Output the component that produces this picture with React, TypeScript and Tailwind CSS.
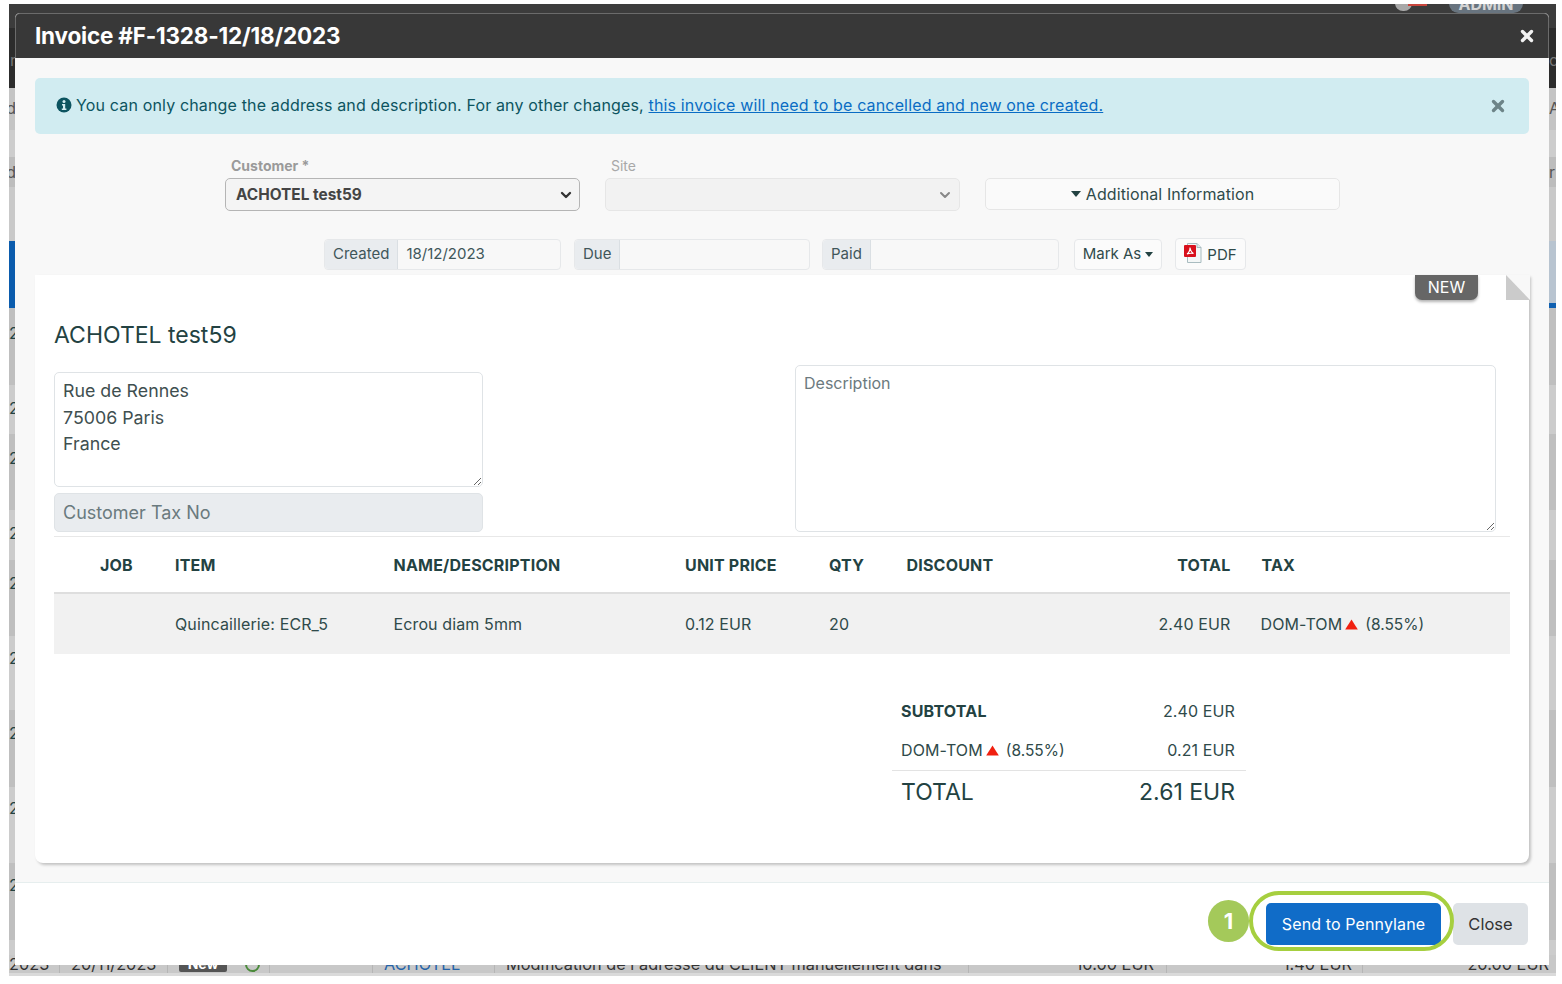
import React from "react";
import { X, ChevronDown } from "lucide-react";

const rows = [
  { c: "h-[24px] bg-[#3c3c3c] pt-[0px]", l: "", r: "" },
  { c: "h-[60px] bg-[#2c2c2c] pt-[21px] text-[#777]", l: "r", r: "c" },
  { c: "h-[42px] bg-[#c4c4c4] pt-[9px] text-[#555]", l: "d", r: "A" },
  { c: "h-[27px] bg-[#cdcdcd]", l: "", r: "" },
  { c: "h-[30px] bg-[#bdbdbd] pt-[4px] text-[#555]", l: "d", r: "r" },
  { c: "h-[54px] bg-[#c9c9c9]", l: "", r: "" },
  { c: "h-[67px] bg-[#b8c4d0]", l: "", r: "" },
  { c: "h-[77px] bg-[#bfbfbf] pt-[14px]", l: "2", r: "" },
  { c: "h-[49px] bg-[#cccccc] pt-[12px]", l: "2", r: "" },
  { c: "h-[76px] bg-[#bfbfbf] pt-[13px]", l: "2", r: "" },
  { c: "h-[50px] bg-[#cccccc] pt-[12px]", l: "2", r: "" },
  { c: "h-[76px] bg-[#bfbfbf] pt-[12px]", l: "2", r: "" },
  { c: "h-[74px] bg-[#cccccc] pt-[11px]", l: "2", r: "" },
  { c: "h-[77px] bg-[#bfbfbf] pt-[12px]", l: "2", r: "" },
  { c: "h-[76px] bg-[#cccccc] pt-[10px]", l: "2", r: "" },
  { c: "h-[77px] bg-[#bfbfbf] pt-[11px]", l: "2", r: "" },
  { c: "h-[36px] bg-[#cccccc]", l: "", r: "" },
];

function TaxFlag() {
  return (
    <svg width="13" height="11" viewBox="0 0 13 11" className="inline-block mx-[3px] align-[0px]">
      <path d="M6.5 0.5 L12.8 10.5 L0.2 10.5 Z" fill="#f02010" />
    </svg>
  );
}

function Addon({ label, w, addon }: { label: string; w: string; addon?: string }) {
  return (
    <div className={`flex h-[31px] ${w} rounded-[4px] border border-[#e6e8ea] text-[15px] text-[#2f4a4a]`}>
      <span className="flex items-center bg-[#e9ecef] border-r border-[#dadfe3] px-[8px] rounded-l-[4px] text-[#40565a]">{label}</span>
      <span className="flex items-center pl-[8px] text-[#40565a]">{addon}</span>
    </div>
  );
}

export default function App() {
  return (
    <div className="relative w-[1562px] h-[984px] bg-white overflow-hidden font-['Inter','Liberation_Sans',sans-serif]">
      <div className="relative ml-[9px] mt-[4px] w-[1547px] h-[972px] bg-[#c8c8c8] overflow-hidden text-[#234242]">
        <div className="flex flex-col">
          {rows.map((r, i) => (
            <div key={i} className={`flex items-start justify-between overflow-hidden text-[16px] leading-[22px] ${r.c}`}>
              <span className={`flex w-[7px] overflow-hidden ${r.l === "2" ? "justify-start" : "justify-end"}`}>{r.l}</span>
              <span className="flex w-[7px] justify-start overflow-hidden">{r.r}</span>
            </div>
          ))}
        </div>

        <div className="absolute left-0 top-[237px] h-[67px] w-[6px] bg-[#0b5cad]" />
        <div className="absolute right-0 top-[299px] h-[5px] w-[7px] bg-[#1060b0]" />
        <div className="absolute left-[1386px] top-[-3px] h-[10px] w-[17px] rounded-b-[8px] bg-[#a8a8a8]" />
        <div className="absolute left-[1399px] top-0 h-[2px] w-[19px] bg-[#c8453c]" />
        <div className="absolute left-[1440px] top-[-10px] flex h-[19px] w-[74px] items-center justify-center rounded-full bg-[#68747f] text-[16px] font-bold text-[#d4d4d4]">ADMIN</div>

        <div className="absolute bottom-0 left-0 right-0 h-[3px] bg-[#dadada]" />
        <div className="absolute bottom-[3px] left-0 right-0 flex h-[18px] items-center bg-[#c8c8c8] text-[16.3px] leading-[18px] text-[#333] whitespace-nowrap">
          <span className="flex h-full w-[51px] items-center border-r border-[#b5b5b5]">2023</span>
          <span className="flex h-full w-[108px] items-center border-r border-[#b5b5b5] pl-[11px]">20/11/2023</span>
          <span className="flex h-full w-[102px] items-center gap-[18px] border-r border-[#b5b5b5] pl-[11px]">
            <span className="flex h-[16px] w-[48px] items-start justify-center overflow-hidden rounded-[2px] bg-[#555] text-[14px] font-bold leading-[15px] text-white">New</span>
            <span className="h-[15px] w-[15px] rounded-full border-2 border-[#4a8a3a]" />
          </span>
          <span className="h-full w-[103px] border-r border-[#b5b5b5]" />
          <span className="flex h-full w-[122px] items-center border-r border-[#b5b5b5] pl-[11px] text-[#2563a8]">ACHOTEL</span>
          <span className="flex h-full w-[474px] items-center border-r border-[#b5b5b5] pl-[11px]">Modification de l'adresse du CLIENT manuellement dans</span>
          <span className="flex h-full w-[198px] items-center justify-end border-r border-[#b5b5b5] pr-[12px]">10.00 EUR</span>
          <span className="flex h-full w-[196px] items-center justify-end border-r border-[#b5b5b5] pr-[10px]">1.40 EUR</span>
          <span className="flex h-full flex-1 items-center justify-end pr-[7px]">20.00 EUR</span>
        </div>

        {/* Dialog */}
        <div className="absolute left-[6px] top-[9px] flex h-[952px] w-[1534px] flex-col overflow-hidden rounded-t-[5px] bg-[#f8f8f8] text-[#234242]">
          <div className="flex h-[45px] shrink-0 items-center justify-between rounded-t-[5px] border border-b-0 border-[#6b6b6b] bg-[#383838] pl-[19px] pr-[12px]">
            <h1 className="text-[22.5px] font-bold tracking-[-0.2px] text-white">Invoice #F-1328-12/18/2023</h1>
            <X size={18} strokeWidth={4.5} className="text-[#f2f2f2]" />
          </div>

          <div className="flex flex-1 flex-col px-[20px] pt-[20px]">
            <div className="flex h-[56px] items-center justify-between rounded-[5px] bg-[#d1ecf1] pl-[21px] pr-[22px] text-[16px] tracking-[0.155px] text-[#0c5460]">
              <p className="flex items-center gap-[4px] pb-[2px]">
                <svg width="16" height="16" viewBox="0 0 16 16">
                  <circle cx="8" cy="8" r="7.5" fill="#0c5460" />
                  <circle cx="8" cy="4.4" r="1.5" fill="#d1ecf1" />
                  <path d="M6 7h3.2v4.6H10.4v1.4H5.8v-1.4h1.2V8.4H6z" fill="#d1ecf1" />
                </svg>
                <span>You can only change the address and description. For any other changes, <a className="text-[#0a6cc4] underline">this invoice will need to be cancelled and new one created.</a></span>
              </p>
              <X size={18} strokeWidth={4.5} className="text-[#6d8488]" />
            </div>

            <div className="ml-[190px] mt-[23px] flex items-end">
              <div className="w-[355px]">
                <label className="mb-[4px] block pl-[6px] text-[14px] font-bold leading-[17px] text-[#9a9a9a]">Customer *</label>
                <div className="flex h-[33px] items-center justify-between rounded-[5px] border border-[#b5b5b5] bg-[#f4f4f4] pl-[10px] pr-[5px] pt-[1px] text-[15.4px] font-bold text-[#444]">
                  ACHOTEL test59
                  <ChevronDown size={16} strokeWidth={3.5} className="text-[#333]" />
                </div>
              </div>
              <div className="ml-[25px] w-[355px]">
                <label className="mb-[4px] block pl-[6px] text-[14px] leading-[17px] text-[#a8a8a8]">Site</label>
                <div className="flex h-[33px] items-center justify-end rounded-[5px] border border-[#e6e6e6] bg-[#f2f2f2] pr-[6px]">
                  <ChevronDown size={16} strokeWidth={3} className="text-[#888]" />
                </div>
              </div>
              <div className="mb-[1px] ml-[25px] flex h-[32px] w-[355px] items-center justify-center gap-[5px] rounded-[5px] border border-[#e6e6e6] bg-[#fafafa] pb-[1px] text-[16px] tracking-[0.1px] text-[#2f4a4a]">
                <span className="h-0 w-0 border-x-[5.5px] border-t-[6px] border-x-transparent border-t-[#234242]" />
                Additional Information
              </div>
            </div>

            <div className="ml-[289px] mt-[28px] flex items-center">
              <Addon label="Created" w="w-[237px]" addon="18/12/2023" />
              <div className="w-[13px]" />
              <Addon label="Due" w="w-[236px]" />
              <div className="w-[12px]" />
              <Addon label="Paid" w="w-[237px]" />
              <div className="ml-[15px] flex h-[31px] w-[88px] items-center justify-center gap-[4px] rounded-[4px] border border-[#e6e8ea] bg-[#fbfbfb] text-[15px] text-[#2f4a4a]">
                Mark As
                <span className="h-0 w-0 border-x-[4.5px] border-t-[5px] border-x-transparent border-t-[#234242]" />
              </div>
              <div className="ml-[13px] mt-[-1px] flex h-[32px] w-[71px] items-center justify-center gap-[5px] rounded-[4px] border border-[#e6e8ea] bg-[#fbfbfb] text-[15px] text-[#2f4a4a]">
                <svg width="18" height="20" viewBox="0 0 18 20" className="mt-[-2px]">
                  <path d="M3.500 0.500h9.500l4 4v15h-13.500z" fill="#f4f7f7" stroke="#a9bcc0" />
                  <path d="M13 0.500v4h4" fill="#dfe8ea" stroke="#a9bcc0" />
                  <rect x="0" y="2" width="12" height="12" rx="1" fill="#d8101c" />
                  <path d="M3 11c1.500-1 3-3.500 3-6.500 .5 3 1.500 5 3.500 6-2-.5-4.500-.2-6.500.5z" fill="none" stroke="#fff" strokeWidth="1.100" />
                </svg>
                <span className="mt-[2px]">PDF</span>
              </div>
            </div>

            <div className="relative mt-[5px] h-[588px] rounded-b-[8px] bg-white px-[19px] shadow-[2px_2px_3px_rgba(0,0,0,0.22)]">
              <div className="absolute right-[51px] top-0 flex h-[25px] w-[63px] items-center justify-center rounded-b-[7px] bg-[#666] pb-[1px] text-[16px] text-white shadow-[0_2px_3px_rgba(0,0,0,0.3)]">NEW</div>
              <div className="absolute right-[-1px] top-0 h-[25px] w-[24px] bg-[#f8f8f8]">
                <svg width="24" height="25" viewBox="0 0 24 25" className="block"><path d="M0 0 L24 25 L0 25 Z" fill="#cbcbcb" /></svg>
              </div>

              <h2 className="pt-[46px] text-[23px] leading-[29px] text-[#234242]">ACHOTEL test59</h2>

              <div className="mt-[-13px] flex justify-between pr-[14px]">
                <div className="mt-[35px] w-[429px]">
                  <textarea
                    readOnly
                    defaultValue={"Rue de Rennes\n75006 Paris\nFrance"}
                    className="block h-[115px] w-full resize-y rounded-[5px] border border-[#dfe3e6] px-[8px] pt-[5px] text-[17.8px] leading-[26.6px] text-[#3f4f50] outline-none"
                  />
                  <input
                    disabled
                    placeholder="Customer Tax No"
                    className="mt-[6px] block h-[39px] w-full rounded-[5px] border border-[#dfe3e6] bg-[#e9ecef] px-[8px] text-[18px] text-[#63757a] outline-none placeholder:text-[#6a7a7e]"
                  />
                </div>
                <textarea
                  readOnly
                  placeholder="Description"
                  className="mt-[28px] block h-[167px] w-[701px] resize-y rounded-[5px] border border-[#dfe3e6] px-[8px] py-[4px] text-[16px] leading-[26px] outline-none placeholder:text-[#6c7a7e]"
                />
              </div>

              <div className="mt-[4px] grid h-[58px] grid-cols-[121px_218.5px_291.5px_144px_77.5px_324px_auto] items-center border-y border-y-[#e8e8e8] border-b-2 border-b-[#dedede] text-[16px] font-bold tracking-[0.2px] text-[#234242]">
                <span className="pl-[46px]">JOB</span>
                <span>ITEM</span>
                <span>NAME/DESCRIPTION</span>
                <span>UNIT PRICE</span>
                <span>QTY</span>
                <span className="flex justify-between"><span>DISCOUNT</span><span>TOTAL</span></span>
                <span className="pl-[31px]">TAX</span>
              </div>
              <div className="grid h-[60px] grid-cols-[121px_218.5px_291.5px_144px_77.5px_324px_auto] items-center bg-[#f1f1f1] text-[16px] tracking-[0.12px] text-[#2f4a4a]">
                <span />
                <span>Quincaillerie: ECR_5</span>
                <span>Ecrou diam 5mm</span>
                <span>0.12 EUR</span>
                <span>20</span>
                <span className="text-right">2.40 EUR</span>
                <span className="pl-[30px]">DOM-TOM<TaxFlag /><span className="ml-[4px] text-[15.5px] tracking-normal">(8.55%)</span></span>
              </div>

              <div className="ml-[838px] mt-[37px] w-[354px] text-[16px] tracking-[0.12px] text-[#2f4a4a]">
                <div className="flex h-[40px] items-center justify-between pl-[9px] pr-[11px]">
                  <span className="font-bold tracking-[0.2px] text-[#234242]">SUBTOTAL</span>
                  <span>2.40 EUR</span>
                </div>
                <div className="mb-[1px] flex h-[38px] items-center justify-between pl-[9px] pr-[11px]">
                  <span>DOM-TOM<TaxFlag /><span className="ml-[4px] text-[15.5px] tracking-normal">(8.55%)</span></span>
                  <span>0.21 EUR</span>
                </div>
                <div className="flex h-[44px] items-center justify-between border-t border-[#e3e3e3] pl-[9px] pr-[11px] text-[23px] tracking-normal text-[#234242]">
                  <span>TOTAL</span>
                  <span>2.61 EUR</span>
                </div>
              </div>
            </div>

            <div className="-mx-[20px] mt-[19px] flex flex-1 items-start justify-end border-t border-[#e6eeee] bg-white pr-[21px] pt-[20px]">
              <button className="h-[42px] w-[175px] rounded-[5px] bg-[#106cc8] text-[16px] tracking-[0.12px] text-white">Send to Pennylane</button>
              <button className="ml-[12px] h-[42px] w-[75px] rounded-[5px] bg-[#dee2e6] text-[16.500px] text-[#333]">Close</button>
            </div>
          </div>
        </div>
      </div>

      <div className="absolute left-[1249px] top-[891px] h-[60px] w-[205px] rounded-[30px] border-4 border-[#a6cf3f]" />
      <div className="absolute left-[1208px] top-[900px] flex h-[42px] w-[41px] items-center justify-center rounded-full bg-[#a4c95a] text-[22px] font-bold text-white">1</div>
    </div>
  );
}
